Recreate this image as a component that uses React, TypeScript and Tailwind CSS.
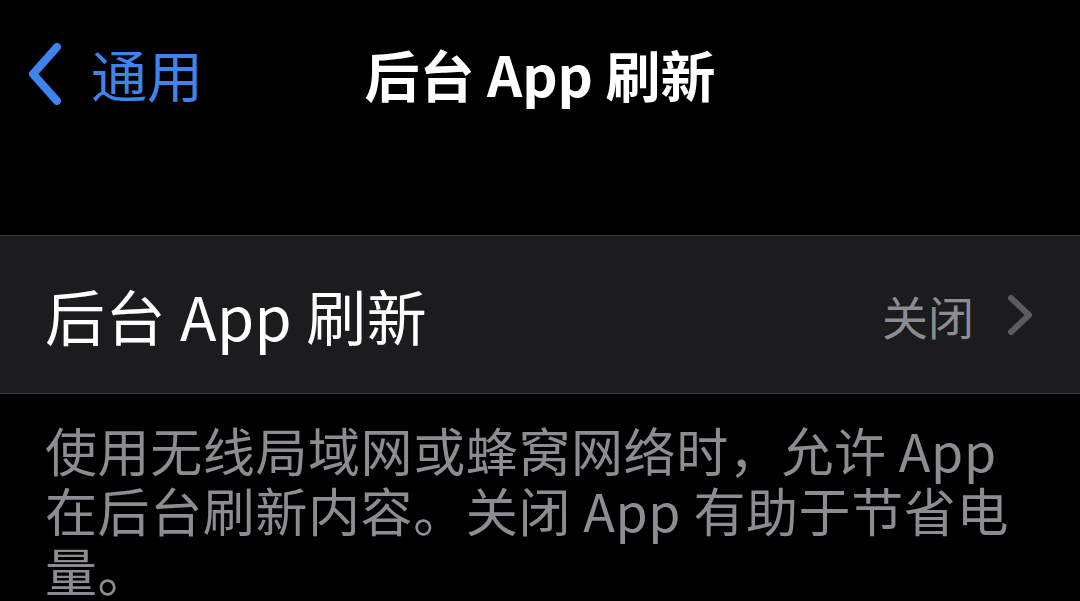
const font = { fontFamily: '"Noto Sans CJK SC", "Noto Sans", sans-serif' };

function BackChevron() {
  return (
    <svg width="40" height="64" viewBox="0 0 40 64" fill="none" aria-hidden>
      <path d="M32 6 L8 33 L32 60" stroke="#3d84f0" strokeWidth="8" strokeLinecap="round" strokeLinejoin="round" />
    </svg>
  );
}

function Disclosure() {
  return (
    <svg width="32" height="42" viewBox="0 0 32 42" fill="none" aria-hidden>
      <path d="M7 4 L25 21 L7 38" stroke="#5b5b60" strokeWidth="6" strokeLinecap="round" strokeLinejoin="round" />
    </svg>
  );
}

export default function App() {
  return (
    <div className="h-[601px] w-[1080px] overflow-hidden bg-black text-white" style={font}>
      {/* 导航栏 */}
      <div className="grid h-[150px] grid-cols-[1fr_auto_1fr] items-center pb-[4px]">
        <div className="flex items-center gap-[26px] pl-[25px] text-[#3d84f0]">
          <BackChevron />
          <span className="text-[56px] leading-none">通用</span>
        </div>
        <div className="text-[55px] font-semibold leading-none">后台 App 刷新</div>
        <div />
      </div>

      <div className="h-[85px]" />

      {/* 设置行 */}
      <div className="flex h-[159px] items-center justify-between border-y border-[#3a3a3c] bg-[#1c1c1e] pl-[45px] pr-[44px]">
        <span className="text-[60px] leading-none tracking-[0.5px]">后台 App 刷新</span>
        <div className="flex items-center gap-[30px]">
          <span className="text-[46px] leading-none text-[#8c8c91]">关闭</span>
          <Disclosure />
        </div>
      </div>

      {/* 说明文字 */}
      <p className="px-[45px] pt-[26px] text-[52px] leading-[60px] tracking-[0.6px] text-[#8c8c91]">
        使用无线局域网或蜂窝网络时，允许 App 在后台刷新内容。关闭 App 有助于节省电量。
      </p>
    </div>
  );
}
